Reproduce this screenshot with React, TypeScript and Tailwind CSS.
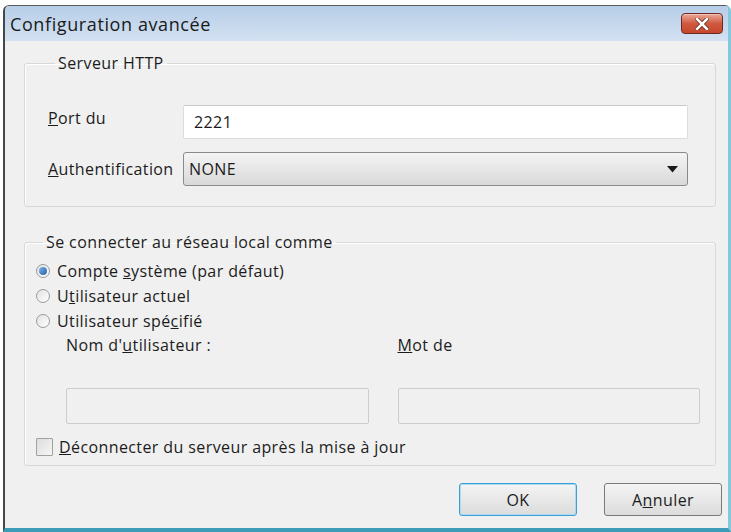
import React from "react";

const font = { fontFamily: '"Open Sans", "Noto Sans", sans-serif' };

const Radio = ({ checked, children }: { checked?: boolean; children: React.ReactNode }) => (
  <div className="flex items-center h-[25px]">
    <span className="w-[14px] h-[14px] rounded-full border border-[#9a9a9a] bg-gradient-to-br from-[#e2e2e2] to-[#ffffff] flex items-center justify-center">
      {checked && (
        <span className="w-[8px] h-[8px] rounded-full bg-gradient-to-br from-[#7fb6e6] to-[#1c5fa8]" />
      )}
    </span>
    <span className="ml-[7px]">{children}</span>
  </div>
);

export default function App() {
  return (
    <div className="w-[731px] h-[532px] bg-white pt-[5px] pl-[3px] text-[16px] leading-[24px] tracking-[0.4px] text-[#1c1c1c]" style={font}>
      <div className="w-[728px] h-[527px] flex flex-col rounded-t-[6px] border-t border-l-2 border-r-[3px] border-b-[4px] border-t-[#5a5a5a] border-l-[#474747] border-r-[#85c8de] border-b-[#3d9cb8] overflow-hidden">
        {/* title bar */}
        <div className="h-[35px] flex items-center justify-between pl-[5px] pr-[5px] bg-gradient-to-b from-[#b7cee8] to-[#d3e1f1]">
          <span className="text-[18px] tracking-[0.6px] text-[#1a1a1a]">Configuration avancée</span>
          <div className="w-[42px] h-[21px] rounded-[4px] border border-[#6b2a20] bg-gradient-to-b from-[#eaa897] via-[#cf5a40] to-[#c7462c] flex items-center justify-center shadow-[inset_0_1px_0_#f3c4b8]">
            <svg width="14" height="12" viewBox="0 0 14 12">
              <path d="M2 1 L12 11 M12 1 L2 11" stroke="#5a1a10" strokeWidth="4" strokeLinecap="square" />
              <path d="M2 1 L12 11 M12 1 L2 11" stroke="#ffffff" strokeWidth="2.6" strokeLinecap="square" />
            </svg>
          </div>
        </div>

        {/* body */}
        <div className="flex-1 flex flex-col bg-[#f0f0f0] pl-[19px] pr-[12px] pt-[10px]">
          <fieldset className="border border-[#d8d8d8] rounded-[3px] pl-[23px] pr-[27px] pb-[20px] shadow-[inset_1px_1px_0_#ffffff]">
            <legend className="ml-[7px] px-[3px]">Serveur HTTP</legend>
            <div className="flex flex-col gap-[13px] mt-[30px]">
              <div className="flex items-start">
                <span className="w-[135px] pt-[1px]"><u>P</u>ort du</span>
                <div className="flex-1 h-[34px] bg-white border border-[#dcdcdc] border-t-[#c8c8c8] rounded-[2px] flex items-center pl-[10px]">
                  2221
                </div>
              </div>
              <div className="flex items-center">
                <span className="w-[135px]"><u>A</u>uthentification</span>
                <div className="flex-1 h-[34px] rounded-[3px] border border-[#8a8a8a] bg-gradient-to-b from-[#f4f4f4] to-[#d9d9d9] flex items-center justify-between pl-[5px] pr-[9px]">
                  <span>NONE</span>
                  <svg width="11" height="7" viewBox="0 0 11 7">
                    <path d="M0 0 H11 L5.5 6.5 Z" fill="#1a1a1a" />
                  </svg>
                </div>
              </div>
            </div>
          </fieldset>

          <fieldset className="mt-[23px] border border-[#d8d8d8] rounded-[3px] pl-[11px] pr-[15px] pb-[9px] shadow-[inset_1px_1px_0_#ffffff]">
            <legend className="ml-[7px] px-[3px]">Se connecter au réseau local comme</legend>
            <div className="mt-[4px] flex flex-col">
              <Radio checked>
                Compte <u>s</u>ystème (par défaut)
              </Radio>
              <Radio>
                U<u>t</u>ilisateur actuel
              </Radio>
              <Radio>
                Utilisateur spé<u>c</u>ifié
              </Radio>
              <div className="flex pl-[30px] gap-[29px]">
                <div className="flex-1 flex flex-col">
                  <span className="h-[25px] leading-[25px]">Nom d'<u>u</u>tilisateur :</span>
                  <div className="mt-[30px] h-[36px] border border-[#cdcdcd] rounded-[2px] bg-[#f0f0f0]" />
                </div>
                <div className="flex-1 flex flex-col">
                  <span className="h-[25px] leading-[25px]"><u>M</u>ot de</span>
                  <div className="mt-[30px] h-[36px] border border-[#cdcdcd] rounded-[2px] bg-[#f0f0f0]" />
                </div>
              </div>
              <div className="flex items-center mt-[14px] h-[18px]">
                <span className="w-[17px] h-[18px] border border-[#a0a0a0] rounded-[1px] bg-gradient-to-br from-[#dcdcdc] to-[#f6f6f6]" />
                <span className="ml-[6px]"><u>D</u>éconnecter du serveur après la mise à jour</span>
              </div>
            </div>
          </fieldset>

          <div className="flex justify-end gap-[27px] mt-[17px] mr-[-6px]">
            <button className="w-[118px] h-[33px] rounded-[3px] border border-[#3c9fd4] shadow-[inset_0_0_0_1px_#a9dbf3] bg-gradient-to-b from-[#f4f4f4] to-[#dcdcdc]">
              OK
            </button>
            <button className="w-[118px] h-[33px] rounded-[3px] border border-[#7a7a7a] bg-gradient-to-b from-[#f4f4f4] to-[#dcdcdc]">
              A<u>n</u>nuler
            </button>
          </div>
        </div>
      </div>
    </div>
  );
}
